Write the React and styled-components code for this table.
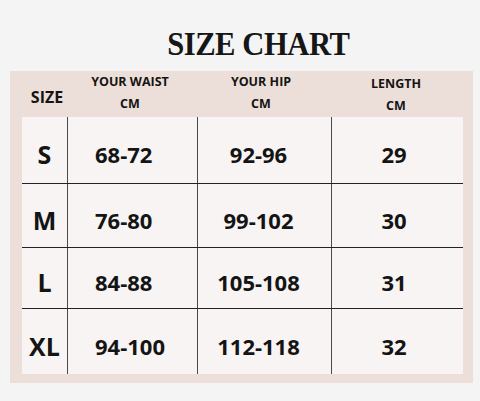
import React from 'react';
import styled, { createGlobalStyle } from 'styled-components';

const rows = [
  { size: 'S', waist: '68-72', hip: '92-96', length: '29' },
  { size: 'M', waist: '76-80', hip: '99-102', length: '30' },
  { size: 'L', waist: '84-88', hip: '105-108', length: '31' },
  { size: 'XL', waist: '94-100', hip: '112-118', length: '32' },
];

const rowHeights = [67, 64, 61, 65];

const App = () => {
  return (
    <Page>
      <GlobalStyle />
      <Title>
        <TitleText>SIZE CHART</TitleText>
      </Title>
      <Panel>
        <HeadRow>
          <SizeHead>SIZE</SizeHead>
          <HeadCell $shift={-4}>
            <span>YOUR WAIST</span>
            <span>CM</span>
          </HeadCell>
          <HeadCell $shift={-6}>
            <span>YOUR HIP</span>
            <span>CM</span>
          </HeadCell>
          <HeadCell $shift={-2} $top={2}>
            <span>LENGTH</span>
            <span>CM</span>
          </HeadCell>
        </HeadRow>
        <Table>
          {rows.map((row, idx) => (
            <Row key={row.size} $h={rowHeights[idx]} $last={idx === rows.length - 1}>
              <SizeCell>{row.size}</SizeCell>
              <Cell $align="left">{row.waist}</Cell>
              <Cell $shift={-12}>{row.hip}</Cell>
              <Cell $shift={-7}>{row.length}</Cell>
            </Row>
          ))}
        </Table>
      </Panel>
    </Page>
  );
};

export default App;

const GlobalStyle = createGlobalStyle`
  html, body {
    margin: 0;
    padding: 0;
    background: #f4f4f4;
  }
`;

const columns = '45px 130px 134px 132px';

const Page = styled.div`
  width: 480px;
  height: 401px;
  background: #f4f4f4;
  overflow: hidden;
  font-family: 'Open Sans', 'Noto Sans', sans-serif;
  color: #141414;
`;

const Title = styled.h1`
  margin: 0;
  height: 71px;
  box-sizing: border-box;
  padding: 27px 0 0 36px;
  text-align: center;
  font-family: 'Liberation Serif', 'Times New Roman', serif;
  font-weight: 700;
  font-size: 34px;
  line-height: 34px;
  color: #161616;
`;

const TitleText = styled.span`
  display: inline-block;
  letter-spacing: -0.5px;
  transform: scaleX(0.9);
  transform-origin: center;
`;

const Panel = styled.div`
  margin: 0 7px 0 10px;
  padding: 0 10px 9px 12px;
  background: #ecdfd9;
`;

const HeadRow = styled.div`
  display: grid;
  grid-template-columns: ${columns};
  height: 46px;
`;

const SizeHead = styled.div`
  display: flex;
  align-items: center;
  justify-content: center;
  padding: 6px 0 0 5px;
  font-size: 16px;
  font-weight: 700;
`;

const HeadCell = styled.div`
  display: flex;
  flex-direction: column;
  align-items: center;
  padding-top: ${(props) => props.$top || 0}px;
  padding-right: ${(props) => -props.$shift || 0}px;
  font-size: 12.5px;
  font-weight: 700;
  line-height: 22px;
`;

const Table = styled.div`
  background: #f7f4f3;
`;

const Row = styled.div`
  display: grid;
  grid-template-columns: ${columns};
  height: ${(props) => props.$h}px;
  box-sizing: border-box;
  border-bottom: ${(props) => (props.$last ? 'none' : '1px solid #222')};
`;

const SizeCell = styled.div`
  display: flex;
  align-items: center;
  justify-content: center;
  padding-top: 8px;
  font-size: 25px;
  font-weight: 700;
`;

const Cell = styled.div`
  display: flex;
  align-items: center;
  justify-content: ${(props) => (props.$align === 'left' ? 'flex-start' : 'center')};
  padding-top: 8px;
  padding-left: ${(props) => (props.$align === 'left' ? '27px' : '0')};
  padding-right: ${(props) => -(props.$shift || 0)}px;
  border-left: 1px solid #4a4a4a;
  font-size: 22px;
  font-weight: 700;
`;
